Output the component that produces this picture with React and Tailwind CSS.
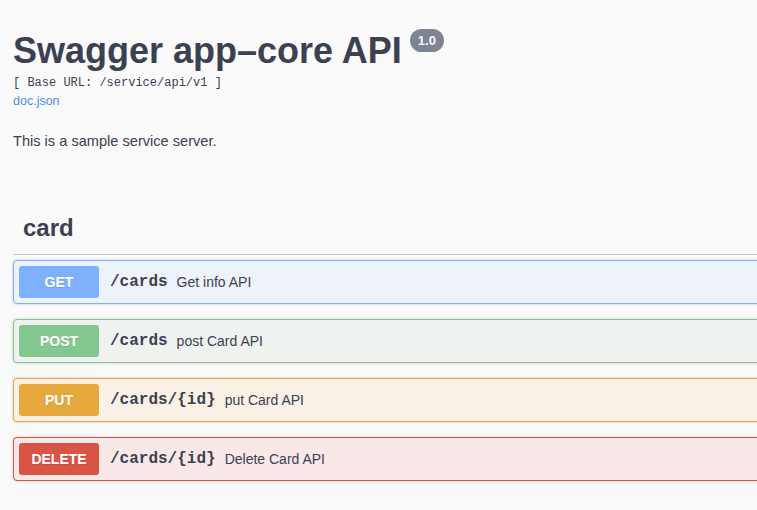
import React from "react";

const ops = [
    { method: "GET", path: "/cards", summary: "Get info API", badge: "bg-[#7eb1fb]", border: "border-[#7eb1fb]", bg: "bg-[#edf2fb]" },
    { method: "POST", path: "/cards", summary: "post Card API", badge: "bg-[#83c98f]", border: "border-[#83c98f]", bg: "bg-[#eef3ef]" },
    { method: "PUT", path: "/cards/{id}", summary: "put Card API", badge: "bg-[#e6a73c]", border: "border-[#e6a73c]", bg: "bg-[#f9f1e6]" },
    { method: "DELETE", path: "/cards/{id}", summary: "Delete Card API", badge: "bg-[#d85444]", border: "border-[#d85444]", bg: "bg-[#f8e8e7]" },
];

const sans = { fontFamily: '"Liberation Sans", Arial, sans-serif' };

const App = () => {
    return (
        <div className="w-[757px] h-[510px] overflow-hidden bg-[#fafafa] text-[#3b4151]" style={sans}>
            <div className="w-[1000px] pl-[13px]">
                <div className="mt-[30px] flex items-start">
                    <h2 className="text-[36px] leading-[41px] font-bold text-[#3b4151]">
                        Swagger app–core API
                    </h2>
                    <span className="ml-[8px] -mt-[1px] h-[23px] px-[8px] rounded-full bg-[#7d8492] text-[#fafafa] text-[13px] font-bold leading-[23px]">
                        1.0
                    </span>
                </div>
                <div className="mt-[5px] text-[12px] leading-[14px] font-['Liberation_Mono',monospace]">
                    [ Base URL: /service/api/v1 ]
                </div>
                <div className="mt-[4px] text-[12.5px] leading-[14px] text-[#4990e2]">
                    doc.json
                </div>
                <p className="mt-[23px] text-[14.6px] leading-[20px]">
                    This is a sample service server.
                </p>

                <h3 className="mt-[61px] pl-[10px] pb-[10px] text-[24px] leading-[32px] font-bold border-b border-[#c4c6cb]">
                    card
                </h3>

                <div className="mt-[5px] flex flex-col gap-[15px]">
                    {ops.map((op, i) => (
                        <div
                            key={i}
                            className={`flex items-center p-[5px] border rounded-[4px] shadow-[0_0_3px_rgba(0,0,0,0.19)] ${op.border} ${op.bg}`}
                        >
                            <div
                                className={`w-[80px] h-[32px] flex items-center justify-center rounded-[3px] text-white text-[14px] font-bold [text-shadow:0_1px_0_rgba(0,0,0,0.1)] ${op.badge}`}
                            >
                                {op.method}
                            </div>
                            <span className="ml-[11px] text-[16px] font-bold font-['Liberation_Mono',monospace] text-[#3b4151]">
                                {op.path}
                            </span>
                            <span className="ml-[9px] text-[14px] text-[#3b4151]">
                                {op.summary}
                            </span>
                        </div>
                    ))}
                </div>
            </div>
        </div>
    );
};

export default App;
